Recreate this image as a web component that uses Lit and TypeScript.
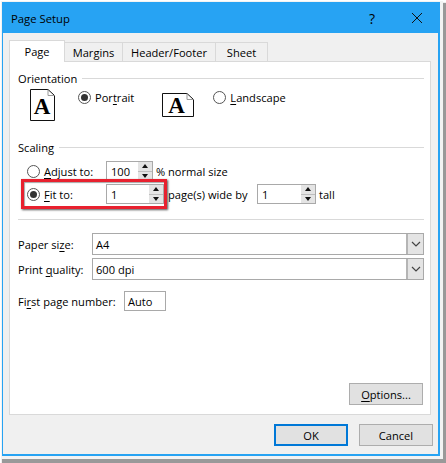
import { LitElement, html, css, svg } from "lit";
import { customElement } from "lit/decorators.js";

@customElement("app-root")
export class AppRoot extends LitElement {
  static styles = css`
    :host { display: block; width: 446px; height: 463px; background: #fff; overflow: hidden;
      font-family: "Open Sans", "Noto Sans", sans-serif; font-size: 11.1px; color: #000; }
    * { box-sizing: border-box; }
    u { text-decoration-thickness: 1px; text-underline-offset: 2px; }
    .window { position: relative; margin: 2px 0 0 2px; width: 438px; height: 454px; background: #f0f0f0;
      border: 1px solid #27a3f3; border-width: 1px 2px 2px 1px;
      box-shadow: 1px 1px 0 2px #f3f3f3, 3px 4px 1px 3px #999; display: flex; flex-direction: column; }
    .title { flex: none; height: 30px; background: #27a3f3; display: flex; align-items: center; padding: 0 0 0 8px;
      font-size: 11.3px; color: #000; }
    .title .name { flex: 1; }
    .help { font-size: 14px; width: 14px; margin-right: 32px; text-align: center; }
    .close { width: 12px; height: 12px; margin: -1px 15px 0 0; display: block; }
    .tabs { flex: none; display: flex; align-items: flex-end; height: 28px; padding-left: 6px; position: relative; }
    .tab { height: 19px; border: 1px solid #d9d9d9; border-bottom: none; border-left: none; background: #f0f0f0;
      display: flex; align-items: center; justify-content: center; }
    .tab.on { height: 22px; background: #fff; border: 1px solid #d9d9d9; border-bottom: none; width: 56px; margin-bottom: -1px;
      position: relative; z-index: 1; }
    .t1 { width: 58px; }
    .t2 { width: 93px; }
    .t3 { width: 52px; }
    .panel { flex: none; margin-left: 6px; width: 422px; height: 354px; background: #fff; border: 1px solid #d9d9d9;
      padding: 8px 6px 0 8px; display: flex; flex-direction: column; }
    .head { display: flex; align-items: center; gap: 5px; height: 17px; }
    .head i { flex: 1; height: 1px; background: #d9d9d9; }
    .orient { display: flex; height: 44px; margin-top: 2px; margin-left: 12px; }
    .page-ic { display: block; flex: none; }
    .opt { display: flex; align-items: center; gap: 4px; height: 16px; }
    .radio { width: 13px; height: 13px; border: 1px solid #555; border-radius: 50%; background: #fff; flex: none;
      display: flex; align-items: center; justify-content: center; }
    .radio.on::after { content: ""; width: 7px; height: 7px; border-radius: 50%; background: #333; }
    .p { margin-left: 23px; }
    .l-ic { margin: 4px 0 0 28px; }
    .l { margin-left: 19px; }
    .scale { margin-top: 6px; }
    .rows { position: relative; margin-top: 5px; padding-left: 9px; display: flex; flex-direction: column; gap: 3px; }
    .row { display: flex; align-items: center; height: 20px; }
    .lab { width: 79px; display: flex; align-items: center; gap: 4px; flex: none; }
    .num { height: 20px; border: 1px solid #a9a9a9; background: #fff; display: flex; align-items: center; padding-left: 4px; justify-content: space-between; }
    .w47 { width: 47px; margin-right: 3px; }
    .w58 { width: 58px; margin-right: 4px; }
    .w58b { width: 59px; margin-right: 3px; }
    .spin { width: 15px; height: 18px; display: flex; flex-direction: column; gap: 1px; background: #bdbdbd; border-left: 1px solid #fff; }
    .spin span { flex: 1; background: #e4e4e4; display: flex; align-items: center; justify-content: center; }
    .up { width: 0; height: 0; border: 3px solid transparent; border-top: 0; border-bottom: 4px solid #111; }
    .down { width: 0; height: 0; border: 3px solid transparent; border-bottom: 0; border-top: 4px solid #111; }
    .wide { width: 89px; flex: none; }
    .mark { position: absolute; left: 3px; top: 18px; width: 146px; height: 30px; border: 3px solid #e8212f;
      box-shadow: 1px 1px 2px #555, inset 1px 1px 1px rgba(0,0,0,.35); pointer-events: none; }
    .sep { height: 1px; background: #d9d9d9; margin-top: 15px; }
    .formrows { display: flex; flex-direction: column; gap: 3px; margin-top: 13px; }
    .frow { display: flex; align-items: center; height: 22px; }
    .frow .lb { width: 74px; flex: none; }
    .select { flex: 1; height: 22px; border: 1px solid #a9a9a9; background: #fff; display: flex; align-items: center; justify-content: space-between; padding-left: 3px; }
    .chev { width: 17px; height: 20px; background: #e4e4e4; border-left: 2px solid #b5b5b5; display: flex; align-items: center; justify-content: center; }
    .chev svg { display: block; }
    .first { display: flex; align-items: center; height: 20px; margin-top: 11px; }
    .first .lb { width: 106px; }
    .auto { width: 42px; height: 20px; border: 1px solid #a9a9a9; padding-left: 3px; display: flex; align-items: center; }
    .spacer { flex: 1; }
    .btn { height: 22px; width: 74px; border: 1px solid #adadad; background: #e1e1e1; display: flex; align-items: center; justify-content: center; }
    .optrow { display: flex; justify-content: flex-end; margin: 0 1px 9px 0; }
    .foot { display: flex; justify-content: flex-end; gap: 11px; margin-top: 9px; padding-right: 5px; }
    .btn.ok { border: 2px solid #0078d7; }
  `;

  private pageIcon(land: boolean) {
    const w = land ? 32 : 25, h = land ? 24 : 32, f = 6;
    return html`<svg class="page-ic ${land ? "l-ic" : ""}" width=${w} height=${h} viewBox="0 0 ${w} ${h}">
      ${svg`<path d="M.5 .5H${w - f - 1}L${w - .5} ${f + .5}V${h - .5}H.5Z" fill="#fff" stroke="#111"/>
      <path d="M${w - f - 1} .5V${f + .5}H${w - .5}" fill="none" stroke="#999"/>
      <text x=${land ? 14.5 : 12} y=${land ? 20 : 25} text-anchor="middle" font-family="Liberation Serif, serif" font-weight="700" font-size="23" fill="#000">A</text>`}
    </svg>`;
  }

  private spin() {
    return html`<div class="spin"><span><b class="up"></b></span><span><b class="down"></b></span></div>`;
  }

  private chev() {
    return html`<div class="chev"><svg width="10" height="6" viewBox="0 0 10 6"><path d="M1 1l4 4 4-4" fill="none" stroke="#444" stroke-width="1.2"/></svg></div>`;
  }

  render() {
    return html`<div class="window">
      <div class="title">
        <span class="name">Page Setup</span>
        <span class="help">?</span>
        <svg class="close" viewBox="0 0 12 12"><path d="M1 1l10 10M11 1L1 11" stroke="#111" stroke-width="1" fill="none"/></svg>
      </div>
      <div class="tabs">
        <div class="tab on">Page</div>
        <div class="tab t1">Margins</div>
        <div class="tab t2">Header/Footer</div>
        <div class="tab t3">Sheet</div>
      </div>
      <div class="panel">
        <div class="head"><span>Orientation</span><i></i></div>
        <div class="orient">
          ${this.pageIcon(false)}
          <div class="opt p"><span class="radio on"></span><span>Por<u>t</u>rait</span></div>
          ${this.pageIcon(true)}
          <div class="opt l"><span class="radio"></span><span><u>L</u>andscape</span></div>
        </div>
        <div class="head scale"><span>Scaling</span><i></i></div>
        <div class="rows">
          <div class="row">
            <div class="lab"><span class="radio"></span><span><u>A</u>djust to:</span></div>
            <div class="num w47"><span>100</span>${this.spin()}</div>
            <span>% normal size</span>
          </div>
          <div class="row">
            <div class="lab"><span class="radio on"></span><span><u>F</u>it to:</span></div>
            <div class="num w58"><span>1</span>${this.spin()}</div>
            <span class="wide">page(s) wide by</span>
            <div class="num w58b"><span>1</span>${this.spin()}</div>
            <span>tall</span>
          </div>
          <div class="mark"></div>
        </div>
        <div class="sep"></div>
        <div class="formrows">
          <div class="frow"><span class="lb">Paper si<u>z</u>e:</span><div class="select"><span>A4</span>${this.chev()}</div></div>
          <div class="frow"><span class="lb">Print <u>q</u>uality:</span><div class="select"><span>600 dpi</span>${this.chev()}</div></div>
        </div>
        <div class="first"><span class="lb">Fi<u>r</u>st page number:</span><div class="auto">Auto</div></div>
        <div class="spacer"></div>
        <div class="optrow"><div class="btn"><span><u>O</u>ptions...</span></div></div>
      </div>
      <div class="foot">
        <div class="btn ok">OK</div>
        <div class="btn">Cancel</div>
      </div>
    </div>`;
  }
}
